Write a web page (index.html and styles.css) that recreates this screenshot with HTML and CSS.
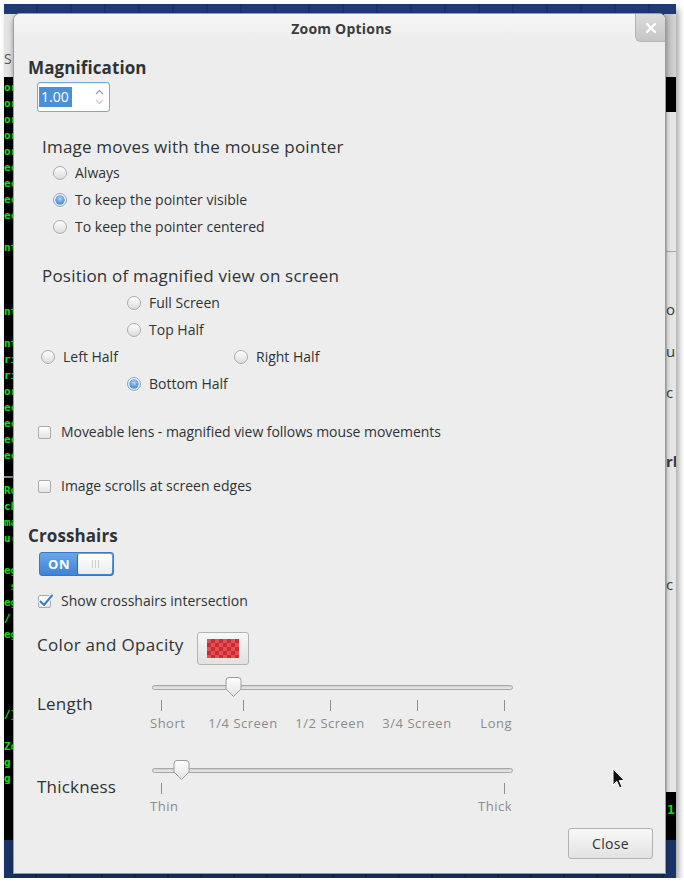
FILE: index.html
```html
<!DOCTYPE html>
<html>
<head>
<meta charset="utf-8">
<title>Zoom Options</title>
<link rel="stylesheet" href="styles.css">
</head>
<body>
<div class="screen">
  <div class="topbar"></div>
  <div class="lwin">
    <div class="lwin-top"><span class="frag-s">S</span></div>
    <pre class="term t1">or
or
or
or
or
ec
ec
ec
ec

nt



nt

nt
ri
ri
or
ec
ec
ec
ec</pre>
    <pre class="term t2">Ro
ch
ma
u(

eg
 s
eg
/
eg




/}

Zo
g
g</pre>
  </div>
  <div class="rwin">
    <div class="rwin-top"></div>
    <div class="rwin-black"></div>
    <div class="rwin-gray">
      <div class="rsep"></div>
      <span class="rfrag f1">o</span>
      <span class="rfrag f2">u</span>
      <span class="rfrag f3">c</span>
      <span class="rfrag f4">rl</span>
      <span class="rfrag f5">c</span>
    </div>
    <div class="rwin-black2"><span class="one">1</span></div>
  </div>

  <div class="dialog">
    <div class="titlebar">
      <span class="title">Zoom Options</span>
      <div class="xbtn">
        <svg width="12" height="12" viewBox="0 0 12 12"><path d="M2 2 L10 10 M10 2 L2 10" stroke="#fff" stroke-width="2.4" stroke-linecap="round"/></svg>
      </div>
    </div>

    <div class="content">
      <div class="heading h-mag">Magnification</div>
      <div class="spin">
        <span class="sel">1.00</span>
        <span class="arrows">
          <svg width="9" height="18" viewBox="0 0 9 18"><path d="M1 6 L4.5 2.5 L8 6" fill="none" stroke="#9a9a9a" stroke-width="1.1"/><path d="M1 12 L4.5 15.5 L8 12" fill="none" stroke="#c8c8c8" stroke-width="1.1"/></svg>
        </span>
      </div>

      <div class="section s-move">Image moves with the mouse pointer</div>
      <div class="radio-list">
        <div class="opt"><span class="radio"></span><span class="lbl">Always</span></div>
        <div class="opt"><span class="radio on"></span><span class="lbl">To keep the pointer visible</span></div>
        <div class="opt"><span class="radio"></span><span class="lbl">To keep the pointer centered</span></div>
      </div>

      <div class="section s-pos">Position of magnified view on screen</div>
      <div class="pos-grid">
        <div class="opt c2"><span class="radio"></span><span class="lbl">Full Screen</span></div>
        <div class="opt c2"><span class="radio"></span><span class="lbl">Top Half</span></div>
        <div class="opt c1"><span class="radio"></span><span class="lbl">Left Half</span></div>
        <div class="opt c3"><span class="radio"></span><span class="lbl">Right Half</span></div>
        <div class="opt c2"><span class="radio on"></span><span class="lbl">Bottom Half</span></div>
      </div>

      <div class="check chk-lens"><span class="box"></span><span class="lbl">Moveable lens - magnified view follows mouse movements</span></div>
      <div class="check chk-scroll"><span class="box"></span><span class="lbl">Image scrolls at screen edges</span></div>

      <div class="heading h-cross">Crosshairs</div>
      <div class="switch">
        <span class="sw-on">ON</span>
        <span class="sw-handle"><i></i><i></i><i></i></span>
      </div>
      <div class="check chk-inter"><span class="box checked">
        <svg class="tick-mark" width="16" height="15" viewBox="0 0 16 15"><path d="M2.5 8.5 L6 12 L14 2.5" fill="none" stroke="#fff" stroke-width="4" stroke-linecap="round" stroke-linejoin="round"/><path d="M2.5 8.5 L6 12 L14 2.5" fill="none" stroke="#3d7cc9" stroke-width="2.2" stroke-linecap="round" stroke-linejoin="round"/></svg>
      </span><span class="lbl">Show crosshairs intersection</span></div>

      <div class="color-row">
        <span class="color-lbl">Color and Opacity</span>
        <span class="color-btn"><span class="swatch"></span></span>
      </div>

      <div class="scale-row r-length">
        <div class="scale-lbl">Length</div>
        <div class="scale">
          <div class="trough"><div class="bar"></div>
            <svg class="knob" style="left:73px" width="17" height="21" viewBox="0 0 17 21"><defs><linearGradient id="kg1" x1="0" y1="0" x2="0" y2="1"><stop offset="0" stop-color="#ffffff"/><stop offset="1" stop-color="#e2e2e2"/></linearGradient></defs><path d="M1 3.5 Q1 0.5 4 0.5 H13 Q16 0.5 16 3.5 V12 L8.5 19.5 L1 12 Z" fill="url(#kg1)" stroke="#9c9c9c"/></svg>
          </div>
          <div class="marks">
            <span class="tk" style="left:9px"></span>
            <span class="tk" style="left:91px"></span>
            <span class="tk" style="left:178px"></span>
            <span class="tk" style="left:265px"></span>
            <span class="tk" style="left:352px"></span>
          </div>
          <div class="mlabels">
            <span class="ml first" style="left:-2px">Short</span>
            <span class="ml" style="left:91px">1/4 Screen</span>
            <span class="ml" style="left:178px">1/2 Screen</span>
            <span class="ml" style="left:265px">3/4 Screen</span>
            <span class="ml last" style="right:0">Long</span>
          </div>
        </div>
      </div>

      <div class="scale-row r-thick">
        <div class="scale-lbl">Thickness</div>
        <div class="scale">
          <div class="trough"><div class="bar"></div>
            <svg class="knob" style="left:21px" width="17" height="21" viewBox="0 0 17 21"><defs><linearGradient id="kg2" x1="0" y1="0" x2="0" y2="1"><stop offset="0" stop-color="#ffffff"/><stop offset="1" stop-color="#e2e2e2"/></linearGradient></defs><path d="M1 3.5 Q1 0.5 4 0.5 H13 Q16 0.5 16 3.5 V12 L8.5 19.5 L1 12 Z" fill="url(#kg2)" stroke="#9c9c9c"/></svg>
          </div>
          <div class="marks">
            <span class="tk" style="left:9px"></span>
            <span class="tk" style="left:352px"></span>
          </div>
          <div class="mlabels">
            <span class="ml first" style="left:-2px">Thin</span>
            <span class="ml last" style="right:0">Thick</span>
          </div>
        </div>
      </div>

      <div class="actions"><span class="close-btn">Close</span></div>
    </div>
  </div>

  <svg class="cursor" width="14" height="22" viewBox="0 0 14 22"><path d="M1 1 L1 17 L4.8 13.4 L7.6 19.8 L10 18.8 L7.3 12.6 L12.4 12.6 Z" fill="#111" stroke="#fff" stroke-width="1"/></svg>
</div>
</body>
</html>
```

FILE: styles.css
```css
* { box-sizing: border-box; }

body {
  margin: 0;
  background: #ffffff;
  font-family: "Open Sans", "DejaVu Sans", sans-serif;
  color: #2e3436;
}

.screen {
  position: relative;
  margin: 4px 0 0 4px;
  width: 672px;
  height: 874px;
  overflow: hidden;
  background: repeating-linear-gradient(90deg, #1b3468 0 31px, #16295a 31px 33px);
  box-shadow: 3px 5px 6px rgba(0, 0, 0, 0.35);
}

.topbar {
  height: 10px;
  background: repeating-linear-gradient(90deg, #1f3b72 0 32px, #1a3266 32px 34px);
}

/* left background window (terminal) */
.lwin {
  position: absolute;
  left: 0;
  top: 10px;
  width: 60px;
  height: 826px;
  background: #000;
}
.lwin-top {
  height: 63px;
  background: #e4e4e4;
  position: relative;
}
.frag-s {
  position: absolute;
  left: 0;
  top: 35px;
  font-size: 14px;
  color: #555;
}
.term {
  margin: 0;
  font-family: "DejaVu Sans Mono", monospace;
  font-weight: bold;
  font-size: 11px;
  line-height: 16px;
  color: #12e012;
  padding-left: 0;
}
.t1 {
  height: 401px;
  padding-top: 3px;
  border-bottom: 2px solid #8a8a8a;
}
.t2 {
  padding-top: 5px;
}

/* right background window */
.rwin {
  position: absolute;
  left: 660px;
  top: 10px;
  width: 12px;
  height: 826px;
  display: flex;
  flex-direction: column;
}
.rwin-top {
  height: 63px;
  background: linear-gradient(90deg, #b8b8b8, #d4d4d4);
}
.rwin-black {
  height: 35px;
  background: #000;
}
.rwin-gray {
  position: relative;
  flex: 1;
  background: linear-gradient(90deg, #9a9a9a 0 1px, #c8c8c8 1px 3px, #e6e6e6 3px);
}
.rsep {
  position: absolute;
  left: 0;
  right: 0;
  top: 139px;
  height: 1px;
  background: #a8a8a8;
}
.rfrag {
  position: absolute;
  left: 2px;
  font-size: 15px;
  color: #3a3a3a;
  line-height: 16px;
}
.f1 { top: 189px; }
.f2 { top: 231px; }
.f3 { top: 272px; }
.f4 { top: 341px; font-weight: bold; }
.f5 { top: 464px; }
.rwin-black2 {
  height: 48px;
  background: #000;
  position: relative;
}
.one {
  position: absolute;
  left: 3px;
  top: 10px;
  font-family: "DejaVu Sans Mono", monospace;
  font-weight: bold;
  font-size: 13px;
  color: #12e012;
}

/* dialog window */
.dialog {
  position: absolute;
  left: 10px;
  top: 10px;
  width: 651px;
  height: 859px;
  background: #ededed;
  border-radius: 6px 6px 0 0;
  box-shadow: 0 0 0 1px #9c9c9c, 0 2px 6px rgba(0, 0, 0, 0.45);
  display: flex;
  flex-direction: column;
}

.titlebar {
  position: relative;
  height: 28px;
  flex: none;
  border-radius: 6px 6px 0 0;
  background: linear-gradient(#f6f6f6, #ededed);
  display: flex;
  align-items: center;
  justify-content: center;
  padding-left: 4px;
}
.title {
  font-size: 14px;
  font-weight: bold;
  color: #3a3d3e;
  line-height: 18px;
  padding-top: 2px;
  letter-spacing: 0.2px;
}
.xbtn {
  position: absolute;
  top: 0;
  right: 0;
  width: 30px;
  height: 28px;
  border-radius: 0 6px 0 6px;
  background: linear-gradient(#dcdcdc, #c6c6c6);
  border-left: 1px solid #b4b4b4;
  border-bottom: 1px solid #b4b4b4;
  display: flex;
  align-items: center;
  justify-content: center;
}

.content {
  display: flex;
  flex-direction: column;
  align-items: flex-start;
}

.heading {
  font-size: 17px;
  font-weight: bold;
  height: 20px;
  line-height: 20px;
  color: #2e3436;
  margin-left: 14px;
  letter-spacing: 0.1px;
}
.h-mag { margin-top: 16px; }
.h-cross { margin-top: 30px; }

.spin {
  margin: 4px 0 0 23px;
  width: 73px;
  height: 30px;
  border: 1px solid #79a6dc;
  border-radius: 3px;
  background: #fff;
  display: flex;
  align-items: center;
  padding-left: 1px;
  box-shadow: inset 0 1px 1px rgba(0, 0, 0, 0.08);
}
.sel {
  background: #4a90d9;
  color: #fff;
  font-size: 14px;
  line-height: 20px;
  height: 20px;
  padding: 0 3px 0 2px;
}
.arrows {
  margin-left: auto;
  margin-right: 5px;
  display: flex;
}

.section {
  font-size: 17px;
  height: 20px;
  line-height: 20px;
  margin-left: 28px;
  color: #2e3436;
  letter-spacing: 0.2px;
}
.s-move { margin-top: 25px; }
.s-pos { margin-top: 26px; }

.radio-list {
  margin: 3px 0 0 39px;
  display: flex;
  flex-direction: column;
}
.opt {
  display: flex;
  align-items: center;
  height: 27px;
}
.radio-list .opt:first-child { margin-top: -1px; }
.radio {
  position: relative;
  width: 14px;
  height: 14px;
  flex: none;
  border-radius: 50%;
  border: 1px solid #a9a9a9;
  background: linear-gradient(#ffffff, #dcdcdc);
  box-shadow: 0 1px 0 rgba(255, 255, 255, 0.8);
}
.radio.on {
  border-color: #8aa6c8;
  background: linear-gradient(#f6f8fb, #dde4ee);
}
.radio.on::after {
  content: "";
  position: absolute;
  left: 2px;
  top: 2px;
  width: 8px;
  height: 8px;
  border-radius: 50%;
  background: radial-gradient(circle at 50% 35%, #b9dafb 0, #5d9fe6 55%, #2c6cc0 100%);
  box-shadow: 0 0 0 0.5px #2a5fa8;
}
.lbl {
  font-size: 14px;
  line-height: 20px;
  margin-left: 8px;
  color: #2e3436;
  white-space: nowrap;
}

.pos-grid {
  margin: 3px 0 0 27px;
  display: grid;
  grid-template-columns: 86px 107px auto;
  grid-auto-rows: 27px;
}
.c1 { grid-column: 1; }
.c2 { grid-column: 2; }
.c3 { grid-column: 3; }
.pos-grid .opt:nth-child(3) { grid-row: 3; }
.pos-grid .opt:nth-child(4) { grid-row: 3; }
.pos-grid .opt:nth-child(5) { grid-row: 4; }

.check {
  display: flex;
  align-items: center;
  height: 20px;
  margin-left: 24px;
}
.chk-lens { margin-top: 25px; }
.chk-scroll { margin-top: 34px; }
.chk-inter { margin-top: 15px; }
.box {
  position: relative;
  width: 13px;
  height: 13px;
  flex: none;
  border: 1px solid #ababab;
  border-radius: 2px;
  background: linear-gradient(#ffffff, #e4e4e4);
}
.check .lbl { margin-left: 10px; }
.chk-lens .lbl { letter-spacing: -0.05px; }
.tick-mark {
  position: absolute;
  left: -1px;
  top: -3px;
}

.switch {
  margin: 6px 0 0 25px;
  width: 75px;
  height: 24px;
  border: 1px solid #3b76c2;
  border-radius: 3px;
  display: flex;
  overflow: hidden;
  background: linear-gradient(#6aa6ea, #3e83d6);
}
.sw-on {
  width: 37px;
  color: #fff;
  font-weight: bold;
  font-size: 13px;
  line-height: 22px;
  text-align: center;
  letter-spacing: 0.5px;
  padding-left: 1px;
}
.sw-handle {
  flex: 1;
  margin: 1px 1px 1px 0;
  border-radius: 2px;
  background: linear-gradient(#ffffff, #ececec);
  border-left: 1px solid #2f66ad;
  display: flex;
  justify-content: center;
  align-items: center;
  gap: 2px;
}
.sw-handle i {
  width: 1px;
  height: 8px;
  background: #cfcfcf;
}

.color-row {
  margin: 21px 0 0 23px;
  display: flex;
  align-items: flex-start;
}
.color-lbl {
  width: 160px;
  font-size: 17px;
  line-height: 20px;
  margin-top: 3px;
  color: #2e3436;
  letter-spacing: 0.3px;
}
.color-btn {
  width: 52px;
  height: 33px;
  border: 1px solid #b4b4b4;
  border-radius: 3px;
  background: linear-gradient(#f7f7f7, #e1e1e1);
  padding: 6px 0 0 9px;
}
.swatch {
  display: block;
  width: 32px;
  height: 19px;
  background-color: #e14f52;
  background-image:
    linear-gradient(45deg, #c92d31 25%, transparent 25%, transparent 75%, #c92d31 75%),
    linear-gradient(45deg, #c92d31 25%, transparent 25%, transparent 75%, #c92d31 75%);
  background-size: 8px 8px;
  background-position: 0 0, 4px 4px;
}

.scale-row {
  display: flex;
  align-items: center;
  margin-left: 23px;
}
.r-length { margin-top: 12px; }
.r-thick { margin-top: 28px; }
.scale-lbl {
  width: 115px;
  font-size: 17px;
  line-height: 20px;
  color: #2e3436;
  letter-spacing: 0.2px;
  margin-top: -2px;
}
.scale {
  width: 361px;
  height: 55px;
}
.trough {
  position: relative;
  height: 23px;
  padding-top: 8px;
}
.bar {
  height: 5px;
  border: 1px solid #a6a6a6;
  border-radius: 3px;
  background: linear-gradient(#d2d2d2, #e8e8e8);
}
.knob {
  position: absolute;
  top: 0;
}
.marks {
  position: relative;
  height: 11px;
}
.tk {
  position: absolute;
  top: 0;
  width: 1px;
  height: 11px;
  background: #8e8e8e;
}
.mlabels {
  position: relative;
  height: 21px;
  padding-top: 2px;
}
.ml {
  position: absolute;
  top: 2px;
  font-size: 13px;
  line-height: 21px;
  color: #8b8b8b;
  white-space: nowrap;
  letter-spacing: 0.5px;
  transform: translateX(-50%);
}
.ml.first { transform: none; }
.ml.last { transform: none; right: 1px !important; }

.actions {
  align-self: stretch;
  display: flex;
  justify-content: flex-end;
  margin: 13px 12px 0 0;
}
.close-btn {
  width: 85px;
  height: 31px;
  border: 1px solid #b2b2b2;
  border-radius: 3px;
  background: linear-gradient(#f8f8f8, #e2e2e2);
  font-size: 14px;
  line-height: 29px;
  text-align: center;
  color: #2e3436;
  letter-spacing: 0.3px;
}

.cursor {
  position: absolute;
  left: 608px;
  top: 764px;
}
```
